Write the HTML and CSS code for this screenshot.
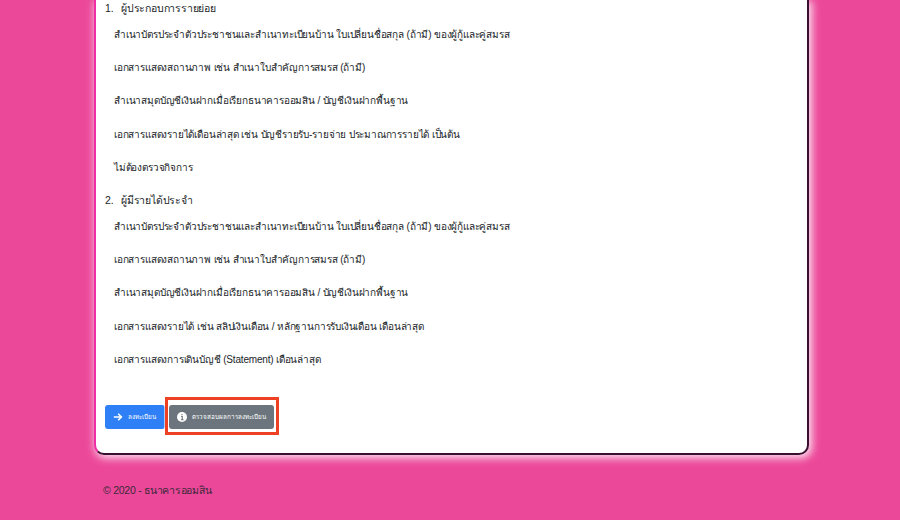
FILE: index.html
```html
<!DOCTYPE html>
<html lang="th">
<head>
    <meta charset="UTF-8">
    <meta name="viewport" content="width=device-width, initial-scale=1.0">
    <title>ธนาคารออมสิน</title>
    <link rel="stylesheet" href="styles.css">
</head>
<body>
    <main class="card">
        <h5 class="group-title"><span class="num">1.</span>ผู้ประกอบการรายย่อย</h5>
        <p class="doc">สำเนาบัตรประจำตัวประชาชนและสำเนาทะเบียนบ้าน ใบเปลี่ยนชื่อสกุล (ถ้ามี) ของผู้กู้และคู่สมรส</p>
        <p class="doc">เอกสารแสดงสถานภาพ เช่น สำเนาใบสำคัญการสมรส (ถ้ามี)</p>
        <p class="doc">สำเนาสมุดบัญชีเงินฝากเมื่อเรียกธนาคารออมสิน / บัญชีเงินฝากพื้นฐาน</p>
        <p class="doc">เอกสารแสดงรายได้เดือนล่าสุด เช่น บัญชีรายรับ-รายจ่าย ประมาณการรายได้ เป็นต้น</p>
        <p class="doc">ไม่ต้องตรวจกิจการ</p>

        <h5 class="group-title second"><span class="num">2.</span>ผู้มีรายได้ประจำ</h5>
        <p class="doc">สำเนาบัตรประจำตัวประชาชนและสำเนาทะเบียนบ้าน ใบเปลี่ยนชื่อสกุล (ถ้ามี) ของผู้กู้และคู่สมรส</p>
        <p class="doc">เอกสารแสดงสถานภาพ เช่น สำเนาใบสำคัญการสมรส (ถ้ามี)</p>
        <p class="doc">สำเนาสมุดบัญชีเงินฝากเมื่อเรียกธนาคารออมสิน / บัญชีเงินฝากพื้นฐาน</p>
        <p class="doc">เอกสารแสดงรายได้ เช่น สลิปเงินเดือน / หลักฐานการรับเงินเดือน เดือนล่าสุด</p>
        <p class="doc">เอกสารแสดงการเดินบัญชี (Statement) เดือนล่าสุด</p>

        <div class="button-group">
            <a class="btn btn-blue" href="#">
                <svg class="icon" viewBox="0 0 12 12" width="10" height="10"><path d="M1 6h9M6.2 2l4 4-4 4" fill="none" stroke="#fff" stroke-width="1.8"/></svg>
                ลงทะเบียน
            </a>
            <span class="btn-wrap">
                <a class="btn btn-gray" href="#">
                    <svg class="icon" viewBox="0 0 12 12" width="10" height="10"><circle cx="6" cy="6" r="6" fill="#fff"/><path d="M6 2.3v1.6M4.9 5.3H6.3V9M4.8 9.2h3" fill="none" stroke="#6c757d" stroke-width="1.3"/></svg>
                    ตรวจสอบผลการลงทะเบียน
                </a>
                <span class="highlight"></span>
            </span>
        </div>
    </main>
    <footer class="foot">© 2020 - ธนาคารออมสิน</footer>
</body>
</html>
```

FILE: styles.css
```css
html, body {
    height: 100%;
}
body {
    margin: 0;
    overflow: hidden;
    background-color: #ec4899;
    font-family: "Liberation Sans", "Noto Sans", "DejaVu Sans", sans-serif;
    color: #212529;
}
.card {
    box-sizing: border-box;
    width: 715px;
    height: 455px;
    margin-left: 94px;
    padding: 0 10px 0 9px;
    background: #ffffff;
    border: 2px solid #3a1030;
    border-left-color: #ee2fa5;
    border-top: none;
    border-radius: 0 0 10px 10px;
    box-shadow: 2px 2px 8px 1px rgba(255, 255, 255, 0.85);
}
.group-title {
    display: flex;
    margin: 0 0 2px;
    font-size: 10.5px;
    font-weight: 400;
    letter-spacing: -0.2px;
    line-height: 16px;
}
.group-title .num {
    width: 16px;
}
.group-title.second {
    margin-top: 8px;
}
.doc {
    margin: 0 0 0 9px;
    font-size: 10px;
    letter-spacing: -0.18px;
    line-height: 33.2px;
}
.button-group {
    display: flex;
    margin-top: 29px;
}
.btn {
    display: flex;
    align-items: center;
    height: 24px;
    border-radius: 3px;
    color: #ffffff;
    font-size: 6.3px;
    text-decoration: none;
}
.icon {
    margin-right: 5px;
}
.btn-blue {
    width: 60px;
    padding-left: 8px;
    box-sizing: border-box;
    background-color: #2f80f6;
}
.btn-gray {
    width: 105px;
    padding-left: 8px;
    box-sizing: border-box;
    background-color: #6c757d;
}
.btn-wrap {
    position: relative;
    margin-left: 4px;
}
.highlight {
    position: absolute;
    top: -8px;
    left: -4px;
    right: -5px;
    bottom: -6px;
    border: 3px solid #ee4023;
    box-shadow: 0 0 0 1px rgba(255, 255, 255, 0.6);
}
.foot {
    margin: 28px 0 0 103px;
    font-size: 10.5px;
    letter-spacing: -0.25px;
    line-height: 14px;
    color: #3a2a3a;
}
```
